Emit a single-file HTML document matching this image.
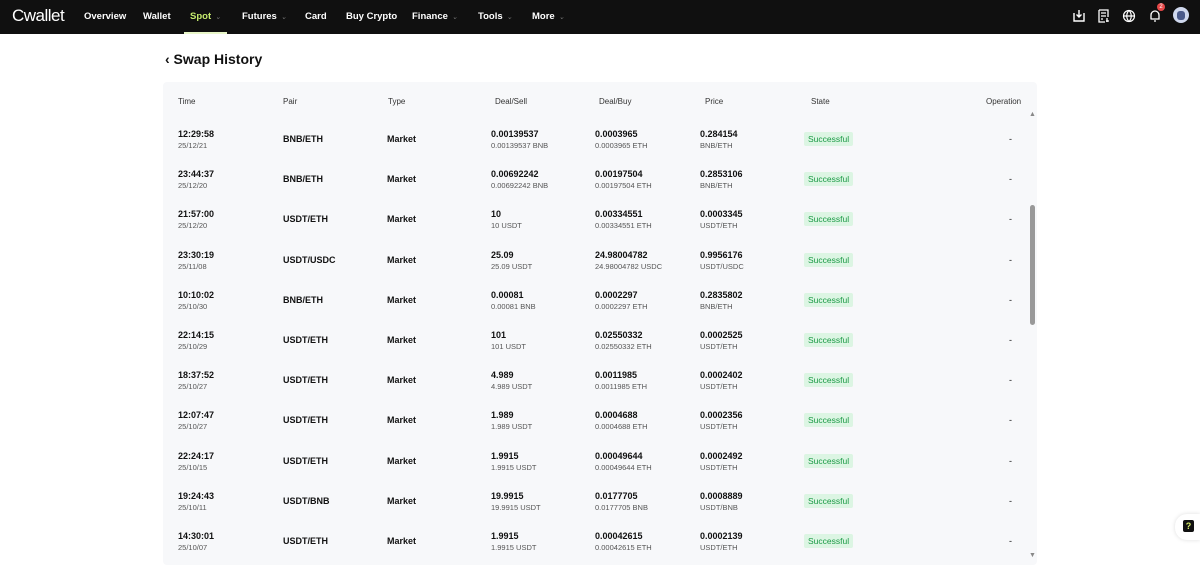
<!DOCTYPE html><html><head><style>
*{margin:0;padding:0;box-sizing:border-box}
body{width:1200px;height:565px;overflow:hidden;background:#fff;font-family:"Liberation Sans",sans-serif;color:#111;position:relative}
.nav{position:absolute;left:0;top:0;width:1200px;height:34px;background:#101010;color:#fff}
.nav span{position:absolute;top:11px;font-size:9.5px;font-weight:bold}
.logo{position:absolute;left:12px;top:6px;font-size:17px;color:#fff;letter-spacing:-0.5px}
.car{font-size:7px;color:#777;margin-left:4px;font-weight:normal}
.panel{position:absolute;left:163px;top:82px;width:874px;height:483px;background:#f7f8fa;border-radius:4px}
.h{position:absolute;top:97px;font-size:8px;color:#333}
.c{position:absolute;font-size:9px;font-weight:bold}
.s{position:absolute;font-size:7.5px;color:#555}
.ok{position:absolute;background:#dcf5e3;color:#1a9a45;font-size:8.5px;padding:2px 4px;border-radius:2px}
</style></head><body>
<div class="nav">
<div class="logo">Cwallet</div>
<span style="left:84px">Overview</span>
<span style="left:143px">Wallet</span>
<span style="left:190px;color:#c6ec6e">Spot<i class="car">⌄</i></span>
<div style="position:absolute;left:184px;top:32px;width:43px;height:2px;background:#e8f6c8"></div>
<span style="left:242px">Futures<i class="car">⌄</i></span>
<span style="left:305px">Card</span>
<span style="left:346px">Buy Crypto</span>
<span style="left:412px">Finance<i class="car">⌄</i></span>
<span style="left:478px">Tools<i class="car">⌄</i></span>
<span style="left:532px">More<i class="car">⌄</i></span>
<svg style="position:absolute;left:1072px;top:9px" width="14" height="14" viewBox="0 0 14 14" fill="none" stroke="#fff" stroke-width="1.4"><path d="M2 4v8h10V4M7 1v7M4.5 5.5 7 8l2.5-2.5"/></svg>
<svg style="position:absolute;left:1097px;top:9px" width="14" height="14" viewBox="0 0 14 14" fill="none" stroke="#fff" stroke-width="1.3"><path d="M2 1h9v7M2 1v12h6M4 4h5M4 7h5M4 10h2"/><path d="M10 9v4M9 12h3" /></svg>
<svg style="position:absolute;left:1122px;top:9px" width="14" height="14" viewBox="0 0 14 14" fill="none" stroke="#fff" stroke-width="1.2"><circle cx="7" cy="7" r="5.5"/><path d="M1.5 7h11M7 1.5c-3 3-3 8 0 11M7 1.5c3 3 3 8 0 11"/></svg>
<svg style="position:absolute;left:1148px;top:9px" width="14" height="14" viewBox="0 0 14 14" fill="none" stroke="#fff" stroke-width="1.3"><path d="M3 10V6a4 4 0 0 1 8 0v4H2.5h9M6 12h2"/></svg>
<div style="position:absolute;left:1157px;top:3px;width:8px;height:8px;border-radius:50%;background:#e54848;color:#fff;font-size:6px;text-align:center;line-height:8px">2</div>
<div style="position:absolute;left:1173px;top:7px;width:16px;height:16px;border-radius:50%;background:#cfd8ee"><div style="margin:4px;width:8px;height:9px;background:#4a5a8a;border-radius:3px"></div></div>
</div>
<div style="position:absolute;left:165px;top:51px;font-size:14px;font-weight:bold">‹ Swap History</div>
<div class="panel"></div>
<div class="h" style="left:178px">Time</div><div class="h" style="left:283px">Pair</div><div class="h" style="left:388px">Type</div><div class="h" style="left:495px">Deal/Sell</div><div class="h" style="left:599px">Deal/Buy</div><div class="h" style="left:705px">Price</div><div class="h" style="left:811px">State</div><div class="h" style="left:986px">Operation</div>
<div style="position:absolute;left:1029px;top:111px;font-size:7px;color:#888">▲</div>
<div style="position:absolute;left:1029px;top:552px;font-size:7px;color:#888">▼</div>
<div style="position:absolute;left:1030px;top:205px;width:5px;height:120px;background:#999;border-radius:3px"></div>
<div style="position:absolute;left:1175px;top:514px;width:25px;height:26px;background:#fff;border-radius:12px 0 0 12px;box-shadow:0 0 4px #ddd"><div style="position:absolute;left:8px;top:6px;width:11px;height:12px;background:#111;color:#d8f06a;font-size:9px;font-weight:bold;text-align:center;line-height:12px;border-radius:2px">?</div></div>
<div id="rows"></div>
<script>
var d=[["12:29:58","25/12/21","BNB/ETH","0.00139537","BNB","0.0003965","ETH","0.284154"],
["23:44:37","25/12/20","BNB/ETH","0.00692242","BNB","0.00197504","ETH","0.2853106"],
["21:57:00","25/12/20","USDT/ETH","10","USDT","0.00334551","ETH","0.0003345"],
["23:30:19","25/11/08","USDT/USDC","25.09","USDT","24.98004782","USDC","0.9956176"],
["10:10:02","25/10/30","BNB/ETH","0.00081","BNB","0.0002297","ETH","0.2835802"],
["22:14:15","25/10/29","USDT/ETH","101","USDT","0.02550332","ETH","0.0002525"],
["18:37:52","25/10/27","USDT/ETH","4.989","USDT","0.0011985","ETH","0.0002402"],
["12:07:47","25/10/27","USDT/ETH","1.989","USDT","0.0004688","ETH","0.0002356"],
["22:24:17","25/10/15","USDT/ETH","1.9915","USDT","0.00049644","ETH","0.0002492"],
["19:24:43","25/10/11","USDT/BNB","19.9915","USDT","0.0177705","BNB","0.0008889"],
["14:30:01","25/10/07","USDT/ETH","1.9915","USDT","0.00042615","ETH","0.0002139"]];
var h="";d.forEach(function(r,i){var y=129+i*40.2;
h+='<div class="c" style="left:178px;top:'+y+'px">'+r[0]+'</div><div class="s" style="left:178px;top:'+(y+12)+'px">'+r[1]+'</div>';
h+='<div class="c" style="left:283px;top:'+(y+5)+'px">'+r[2]+'</div><div class="c" style="left:387px;top:'+(y+5)+'px">Market</div>';
h+='<div class="c" style="left:491px;top:'+y+'px">'+r[3]+'</div><div class="s" style="left:491px;top:'+(y+12)+'px">'+r[3]+' '+r[4]+'</div>';
h+='<div class="c" style="left:595px;top:'+y+'px">'+r[5]+'</div><div class="s" style="left:595px;top:'+(y+12)+'px">'+r[5]+' '+r[6]+'</div>';
h+='<div class="c" style="left:700px;top:'+y+'px">'+r[7]+'</div><div class="s" style="left:700px;top:'+(y+12)+'px">'+r[2]+'</div>';
h+='<div class="ok" style="left:804px;top:'+(y+3)+'px">Successful</div><div class="c" style="left:1009px;top:'+(y+5)+'px;font-weight:normal">-</div>';});
document.getElementById("rows").innerHTML=h;
</script>
</body></html>
